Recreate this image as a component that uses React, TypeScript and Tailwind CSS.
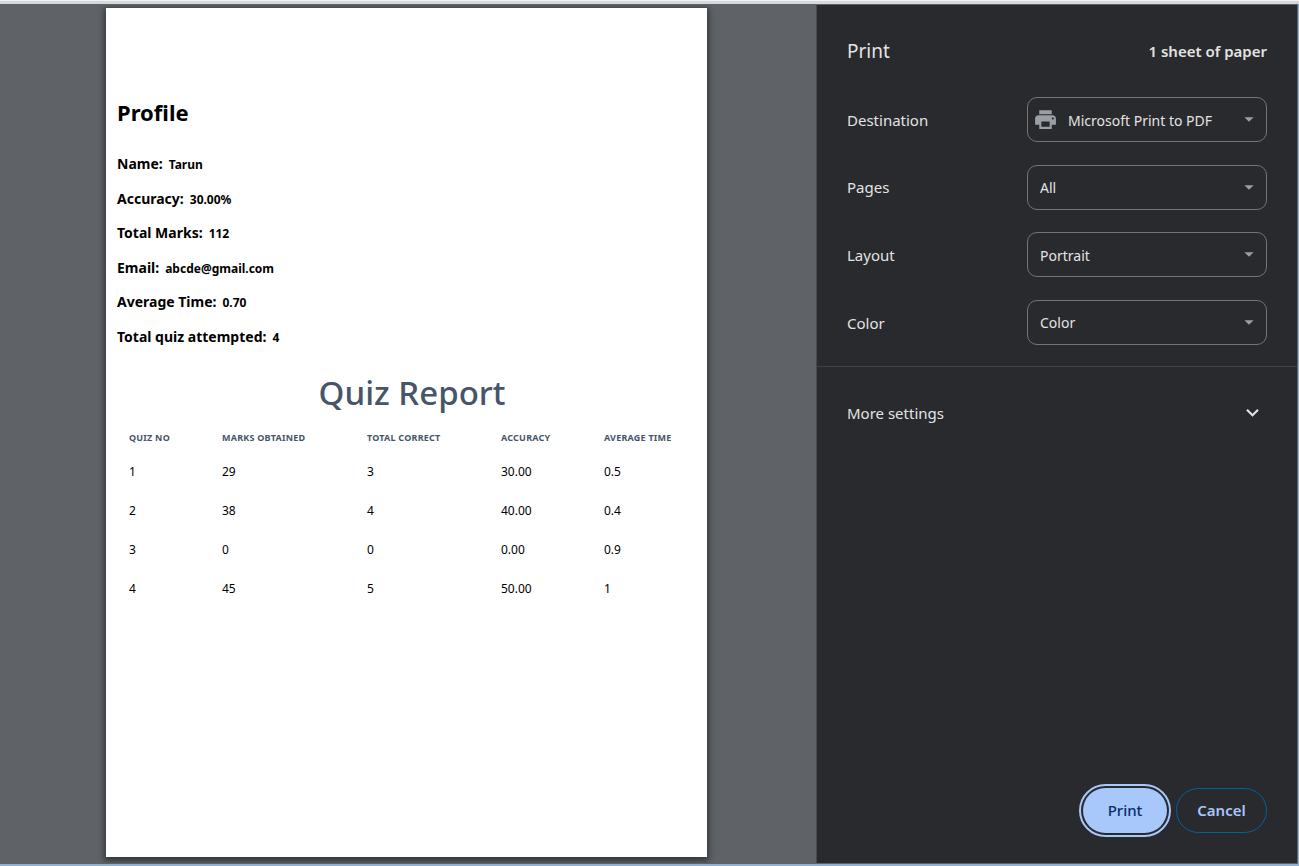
import { MdArrowDropDown, MdExpandMore, MdPrint } from "react-icons/md";

const profile = [
  ["Name:", "Tarun"],
  ["Accuracy:", "30.00%"],
  ["Total Marks:", "112"],
  ["Email:", "abcde@gmail.com"],
  ["Average Time:", "0.70"],
  ["Total quiz attempted:", "4"],
];

const quizzes = [
  ["1", "29", "3", "30.00", "0.5"],
  ["2", "38", "4", "40.00", "0.4"],
  ["3", "0", "0", "0.00", "0.9"],
  ["4", "45", "5", "50.00", "1"],
];

const headings = ["Quiz No", "Marks Obtained", "Total Correct", "Accuracy", "Average Time"];

const settings = [
  { id: "destination", label: "Destination", value: "Microsoft Print to PDF", printer: true },
  { id: "pages", label: "Pages", value: "All" },
  { id: "layout", label: "Layout", value: "Portrait" },
  { id: "color", label: "Color", value: "Color" },
];

type SettingProps = { id: string; label: string; value: string; printer?: boolean };

function Setting({ id, label, value, printer }: SettingProps) {
  return (
    <div className="flex items-center justify-between">
      <label htmlFor={id} className="pt-px">{label}</label>
      <div className="relative h-[45px] w-[240px]">
        <select
          id={id}
          className={`h-full w-full appearance-none rounded-[10px] border border-[#757575] bg-transparent pt-px pr-8 text-[14px] outline-none ${printer ? "pl-10" : "pl-3"}`}
        >
          <option>{value}</option>
        </select>
        {printer && (
          <MdPrint className="pointer-events-none absolute top-2.5 left-1.5 size-[25px] text-[#9aa0a6]" />
        )}
        <MdArrowDropDown className="pointer-events-none absolute top-[11px] right-[7px] size-[22px] text-[#9aa0a6]" />
      </div>
    </div>
  );
}

function Paper() {
  return (
    <article className="aspect-[601/849] h-full bg-white pt-[89px] pl-[11px] text-black shadow-[0_2px_6px_2px_rgba(0,0,0,0.45)]">
      <h1 className="text-[22px] leading-[30px] font-bold">Profile</h1>
      <dl className="mt-[19px] grid h-[207px] auto-rows-fr">
        {profile.map(([label, value]) => (
          <div key={label} className="flex items-baseline gap-1.5 leading-[35px] font-bold">
            <dt className="text-[14px]">{label}</dt>
            <dd className="text-[12px]">{value}</dd>
          </div>
        ))}
      </dl>
      <h2 className="mt-[18px] text-center text-[33px] leading-[44px] font-medium text-[#475569]">
        Quiz Report
      </h2>
      <table className="mt-2 w-full table-fixed text-left">
        <colgroup>
          <col className="w-[93px]" />
          <col className="w-[145px]" />
          <col className="w-[134px]" />
          <col className="w-[103px]" />
          <col className="w-[115px]" />
        </colgroup>
        <thead>
          <tr className="h-[29px]">
            {headings.map((h) => (
              <th key={h} className="pl-3 text-[9px] font-bold tracking-wide whitespace-nowrap text-[#475569] uppercase">
                {h}
              </th>
            ))}
          </tr>
        </thead>
        <tbody>
          {quizzes.map((row) => (
            <tr key={row[0]} className="h-[39px]">
              {row.map((cell, i) => (
                <td key={headings[i]} className="pl-3 text-[12px]">{cell}</td>
              ))}
            </tr>
          ))}
        </tbody>
      </table>
    </article>
  );
}

export default function App() {
  return (
    <div className="flex h-screen min-h-[640px] flex-col bg-[#93b1cf] font-['Noto_Sans',sans-serif]">
      <div className="h-1 shrink-0 border-t border-[#f1f3f4] bg-[#d5d8dd]" />
      <div className="mr-px mb-[2px] flex min-h-0 flex-1 border-y border-r border-[#5f6368] bg-[#292a2d]">
        <main className="flex min-w-0 flex-1 justify-center overflow-hidden bg-[#5f6368] pt-[3px] pr-[3px] pb-[6px]">
          <Paper />
        </main>
        <aside className="flex w-[481px] shrink-0 flex-col border-l border-[#47494d] text-[15px] text-[#e3e3e3]">
          <header className="flex items-center justify-between pt-8 pr-[30px] pl-[30px]">
            <h2 className="text-[19px] leading-7">Print</h2>
            <span className="font-semibold">1 sheet of paper</span>
          </header>
          <div className="mt-8 flex h-[248px] flex-col justify-between px-[30px]">
            {settings.map((s) => (
              <Setting key={s.id} {...s} />
            ))}
          </div>
          <div className="mt-[21px] border-t border-[#3f4145]">
            <button type="button" className="mt-[23px] flex h-[45px] w-full items-center justify-between pr-8 pl-[30px]">
              <span className="pt-0.5">More settings</span>
              <MdExpandMore className="size-[25px]" />
            </button>
          </div>
          <footer className="mt-auto flex justify-end gap-[9px] px-[30px] pb-[30px]">
            <button
              type="button"
              className="h-[45px] w-[84px] rounded-full bg-[#a8c7fa] font-medium text-[#062e6f] outline-2 outline-offset-2 outline-[#a8c7fa]"
            >
              Print
            </button>
            <button
              type="button"
              className="h-[45px] w-[91px] rounded-full border border-[#00639b] font-semibold text-[#a8c7fa]"
            >
              Cancel
            </button>
          </footer>
        </aside>
      </div>
    </div>
  );
}
